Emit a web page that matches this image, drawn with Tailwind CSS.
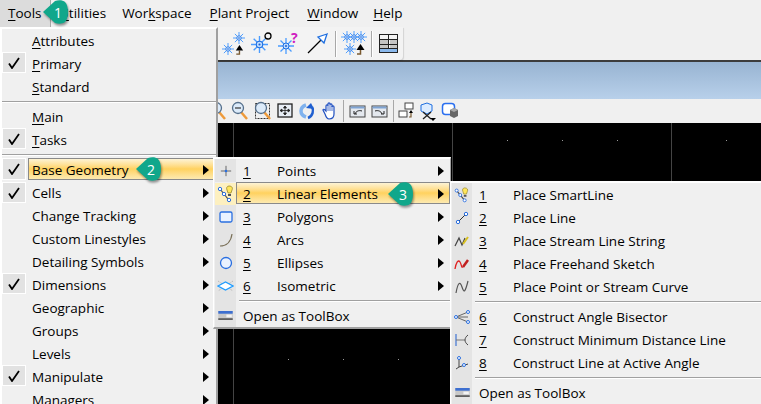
<!DOCTYPE html>
<html lang="en">
<head>
  <meta charset="UTF-8" />
  <title>Tools menu</title>
  <script src="https://cdn.jsdelivr.net/npm/@tailwindcss/browser@4"></script>
</head>
<body class="bg-black overflow-hidden">
  <svg class="hidden">
    <defs>
      <symbol id="star" viewBox="0 0 16 16">
        <path d="M8 0v16M0 8h16M2.500 2.500l11 11M13.500 2.500l-11 11" stroke="#4a9cff" stroke-width="1.300" fill="none"/>
        <circle cx="8" cy="8" r="3" fill="#bcdcff" stroke="#1f6fe0"/>
        <circle cx="8" cy="8" r="1" fill="#1f5fd0"/>
      </symbol>
      <symbol id="up" viewBox="0 0 10 12">
        <path d="M5.500 6v4H2" stroke="#7a5a30" stroke-width="1.500" fill="none"/>
        <path d="M5.500 0L1.500 6h8z" fill="#000"/>
      </symbol>
      <symbol id="mag" viewBox="0 0 20 20">
        <path d="M11 11l6 7" stroke="#ee9a3a" stroke-width="2.500"/>
        <circle cx="8" cy="7" r="5.500" fill="#dcebfa" stroke="#56708c" stroke-width="1.300"/>
      </symbol>
      <symbol id="smart" viewBox="0 0 18 18">
        <path d="M3 4l8 10" stroke="#444" stroke-width="1.200"/>
        <circle cx="3" cy="4" r="1.700" fill="#fff" stroke="#2a6fe0"/>
        <circle cx="7" cy="9" r="1.700" fill="#fff" stroke="#2a6fe0"/>
        <circle cx="12" cy="15" r="1.700" fill="#fff" stroke="#2a6fe0"/>
        <path d="M12 1c3 0 4 2 3 4l-1 3h-3l-1-3c-1-2 0-4 2-4z" fill="#ffe65a" stroke="#8a7a20" stroke-width=".7"/>
        <path d="M11 9h3v2h-3z" fill="#555"/>
      </symbol>
      <symbol id="toolbox" viewBox="0 0 16 10">
        <rect width="16" height="10" fill="#c8c8c8"/>
        <rect width="16" height="3" fill="#3d6fd0"/>
        <rect y="8" width="16" height="2" fill="#606060"/>
        <rect x="9" y="4" width="6" height="3" fill="#f4f4f4"/>
      </symbol>
      <symbol id="arrowright" viewBox="0 0 6 10">
        <path d="M0 0l6 5-6 5z" fill="#000"/>
      </symbol>
      <symbol id="check" viewBox="0 0 12 12">
        <path d="M1 6.500L4 11 11 1" fill="none" stroke="#000" stroke-width="1.800"/>
      </symbol>
    </defs>
  </svg>

  <div class="relative w-[761px] h-[404px] overflow-hidden text-[13.500px] text-black underline-offset-2 font-['Open_Sans',sans-serif]">

    <!-- menu bar -->
    <div class="h-[27px] bg-[#f0f0f0] flex items-center">
      <div class="w-[51px] h-full bg-[#dcdcdc] border-r border-[#a8a8a8] pl-[8px] flex items-center"><span><u>T</u>ools</span></div>
      <span class="ml-[8px]"><u>U</u>tilities</span>
      <span class="ml-[16px]">Wor<u>k</u>space</span>
      <span class="ml-[18px]"><u>P</u>lant Project</span>
      <span class="ml-[18px]"><u>W</u>indow</span>
      <span class="ml-[15px]"><u>H</u>elp</span>
    </div>

    <!-- toolbar row one -->
    <div class="h-[35px] bg-[#f0f0f0] border-b-2 border-[#3c3c3c]">
      <div class="ml-[217px] w-[186px] h-[33px] pl-[5px] flex items-center bg-[#f3f3f3] rounded-br-[4px] shadow-[1px_1px_1px_rgba(0,0,0,.12)]">
        <svg class="w-[24px] h-[24px]" viewBox="0 0 24 24">
          <use href="#star" x="0" y="11" width="12" height="12"/>
          <use href="#star" x="11" y="0" width="12" height="12"/>
          <use href="#up" x="12" y="13" width="10" height="11"/>
        </svg>
        <svg class="ml-[2px] w-[26px] h-[24px] overflow-visible" viewBox="0 0 26 24">
          <use href="#star" x="3" y="4" width="17" height="17"/>
          <ellipse cx="20" cy="4" rx="3" ry="3" fill="none" stroke="#000" stroke-width="1.300"/>
        </svg>
        <svg class="ml-[2px] w-[26px] h-[24px] overflow-visible" viewBox="0 0 26 24">
          <use href="#star" x="2" y="6" width="16" height="16"/>
          <text x="15" y="11" fill="#d020c0" font-size="14" font-weight="700">?</text>
        </svg>
        <svg class="ml-[5px] w-[22px] h-[22px]" viewBox="0 0 22 22">
          <path d="M1 20L15 6" stroke="#000" stroke-width="1.300"/>
          <path d="M20 1l-9 3 6 6z" fill="#fff" stroke="#1f6fe0" stroke-width="1.300"/>
        </svg>
        <div class="ml-[6px] w-[1px] h-[26px] bg-[#a8a8a8] border-r border-white box-content"></div>
        <svg class="ml-[3px] w-[28px] h-[26px]" viewBox="0 0 28 26">
          <use href="#star" x="1" y="0" width="12" height="12"/>
          <use href="#star" x="8" y="0" width="12" height="12"/>
          <use href="#star" x="15" y="0" width="12" height="12"/>
          <use href="#star" x="4" y="12" width="12" height="12"/>
          <use href="#up" x="15" y="13" width="10" height="12"/>
        </svg>
        <div class="ml-[3px] w-[1px] h-[26px] bg-[#a8a8a8] border-r border-white box-content"></div>
        <svg class="ml-[6px] w-[20px] h-[20px]" viewBox="0 0 20 20">
          <rect x=".5" y=".5" width="18" height="18" fill="#f4f4f4" stroke="#222"/>
          <rect x="1" y="6" width="8" height="4" fill="#c4c4c4"/>
          <rect x="11" y="6" width="7" height="4" fill="#c4c4c4"/>
          <rect x="1" y="11" width="8" height="3" fill="#c4c4c4"/>
          <rect x="11" y="11" width="7" height="3" fill="#c4c4c4"/>
          <rect x="1" y="15" width="17" height="3" fill="#8ab8ec"/>
          <path d="M1 5.500h18M1 10.500h18M1 14.500h18M9.500 1v13" stroke="#222"/>
        </svg>
      </div>
    </div>

    <!-- blue band -->
    <div class="h-[37px] bg-gradient-to-b from-[#98b4d2] to-[#b8d0ea]"></div>

    <!-- toolbar row two -->
    <div class="h-[24px] bg-[#f0f0f0] flex items-center pl-[208px]">
      <svg class="w-[20px] h-[20px]"><use href="#mag"/></svg>
      <svg class="ml-[2px] w-[20px] h-[20px]" viewBox="0 0 20 20">
        <use href="#mag"/><path d="M5 7h6" stroke="#333" stroke-width="1.200"/>
      </svg>
      <svg class="ml-[3px] w-[20px] h-[20px]" viewBox="0 0 20 20">
        <rect x="2.500" y="2.500" width="14" height="15" fill="none" stroke="#333" stroke-dasharray="2 1"/>
        <use href="#mag"/>
      </svg>
      <svg class="ml-[2px] w-[20px] h-[20px]" viewBox="0 0 20 20">
        <rect x="3" y="3" width="14" height="13" fill="#e8eef6" stroke="#222" stroke-width="1.300"/>
        <path d="M10 5v9M5 9.500h10M10 5l-1.500 2h3zM10 14l-1.500-2h3zM5 9.500l2-1.500v3zM15 9.500l-2-1.500v3z" stroke="#222" stroke-width=".8" fill="#222"/>
      </svg>
      <svg class="ml-[3px] w-[20px] h-[20px]" viewBox="0 0 20 20">
        <path d="M8 4C5 5 3 7 3 10s2 5 5 6" fill="none" stroke="#7fb2ee" stroke-width="3.500"/>
        <path d="M14 6c2 3 1 9-4 11" fill="none" stroke="#1f5fd0" stroke-width="2.500"/>
        <path d="M8 7l5-5 3 6z" fill="#1f5fd0"/>
      </svg>
      <svg class="ml-[2px] w-[20px] h-[20px]" viewBox="0 0 20 20">
        <path d="M5 13l-2-4c0-1 1-1 2 0l1 1V5c0-1.500 2-1.500 2 0V3c0-1.500 2-1.500 2 0v1c0-1.500 2-1.500 2 0v2c0-1.500 2-1.500 2 0v7c0 3-2 5-5 5-2 0-3-2-4-5z" fill="#fff" stroke="#1f4fc0" stroke-width="1.200"/>
        <path d="M8 5v5M10 4v6M12 5v5" stroke="#1f4fc0" stroke-width=".8"/>
      </svg>
      <div class="ml-[3px] w-[1px] h-[22px] bg-[#a8a8a8]"></div>
      <svg class="ml-[3px] w-[20px] h-[20px]" viewBox="0 0 20 20">
        <rect x="3" y="5" width="15" height="11" fill="#e4e8ee" stroke="#444"/>
        <rect x="3.500" y="5.500" width="14" height="2" fill="#7fa4d4"/>
        <path d="M15 10c-3-1-6 0-7 3M7 10v3h3" fill="none" stroke="#222"/>
      </svg>
      <svg class="ml-[2px] w-[20px] h-[20px]" viewBox="0 0 20 20">
        <rect x="3" y="5" width="15" height="11" fill="#e4e8ee" stroke="#444"/>
        <rect x="3.500" y="5.500" width="14" height="2" fill="#7fa4d4"/>
        <path d="M6 10c3-1 6 0 7 3M15 10v3h-3" fill="none" stroke="#222"/>
      </svg>
      <div class="ml-[4px] w-[1px] h-[22px] bg-[#a8a8a8]"></div>
      <svg class="ml-[3px] w-[20px] h-[20px]" viewBox="0 0 20 20">
        <rect x="8" y="2" width="8" height="6" fill="#fff" stroke="#444"/>
        <rect x="2" y="10" width="8" height="6" fill="#fff" stroke="#444"/>
        <path d="M14 11v5h-2" stroke="#7a5a30" stroke-width="1.200" fill="none"/>
        <path d="M14 9l-2 3h4z" fill="#000"/>
      </svg>
      <svg class="ml-[1px] w-[20px] h-[20px]" viewBox="0 0 20 20">
        <path d="M3 4l6-2 5 2v6l-5 3-6-3z" fill="#dcecff" stroke="#1f6fe0"/>
        <path d="M5 11l8 7M13 11l-8 7" stroke="#222" stroke-width="1.300"/>
        <path d="M12 17h6l-3 3z" fill="#000"/>
      </svg>
      <svg class="ml-[3px] w-[20px] h-[20px]" viewBox="0 0 20 20">
        <rect x="1.500" y="2.500" width="12" height="11" rx="3" fill="#fff" stroke="#2a6ff0" stroke-width="1.500"/>
        <path d="M9 9l4-2 4 2v6l-4 2-4-2z" fill="#666"/>
        <path d="M9 9l4-2 4 2-4 2z" fill="#a8a8a8"/>
      </svg>
    </div>

    <!-- view area -->
    <div class="relative h-[281px] bg-black">
      <div class="absolute left-[233px] top-0 bottom-0 w-px bg-[#444]"></div>
      <div class="absolute left-[452px] top-0 bottom-0 w-px bg-[#444]"></div>
      <div class="absolute left-[671px] top-0 bottom-0 w-px bg-[#444]"></div>
      <div class="absolute left-[507px] top-[17px] w-px h-px bg-[#999]"></div>
      <div class="absolute left-[562px] top-[17px] w-px h-px bg-[#999]"></div>
      <div class="absolute left-[617px] top-[17px] w-px h-px bg-[#999]"></div>
      <div class="absolute left-[726px] top-[17px] w-px h-px bg-[#999]"></div>
      <div class="absolute left-[288px] top-[236px] w-px h-px bg-[#999]"></div>
      <div class="absolute left-[343px] top-[236px] w-px h-px bg-[#999]"></div>
      <div class="absolute left-[398px] top-[236px] w-px h-px bg-[#999]"></div>
    </div>

    <!-- Tools menu -->
    <div class="absolute left-0 top-[27px] w-[218px] h-[390px] bg-[#f0f0f0] border-t-2 border-l-2 border-white border-r-2 border-r-[#a0a0a0] [&_span]:relative [&_span]:top-px">
      <div class="h-[23px] flex items-center pl-[30px]"><span><u>A</u>ttributes</span></div>
      <div class="relative h-[23px] flex items-center pl-[30px]"><div class="absolute left-0 top-0 w-[24px] h-[21px] bg-[#e2e2e2] border border-white flex items-center justify-center"><svg class="w-[12px] h-[12px]"><use href="#check"/></svg></div><span><u>P</u>rimary</span></div>
      <div class="h-[23px] flex items-center pl-[30px]"><span><u>S</u>tandard</span></div>
      <div class="h-[7px] pt-[3px]"><div class="h-px bg-[#a0a0a0]"></div><div class="h-px bg-white"></div></div>
      <div class="h-[23px] flex items-center pl-[30px]"><span><u>M</u>ain</span></div>
      <div class="relative h-[23px] flex items-center pl-[30px]"><div class="absolute left-0 top-0 w-[24px] h-[21px] bg-[#e2e2e2] border border-white flex items-center justify-center"><svg class="w-[12px] h-[12px]"><use href="#check"/></svg></div><span><u>T</u>asks</span></div>
      <div class="h-[7px] pt-[3px]"><div class="h-px bg-[#a0a0a0]"></div><div class="h-px bg-white"></div></div>

      <div class="relative h-[23px] flex items-center justify-between pl-[30px] pr-[7px]">
        <div class="absolute left-0 top-0 w-[24px] h-[22px] bg-[#e2e2e2] border border-white flex items-center justify-center"><svg class="w-[12px] h-[12px]"><use href="#check"/></svg></div>
        <div class="absolute left-[26px] top-0 w-[186px] h-[22px] border border-[#8a8a8a] bg-gradient-to-b from-[#fdf3d4] via-[#ffd25e] to-[#fdeab0]"></div>
        <span>Base Geometry</span><svg class="relative w-[6px] h-[10px]"><use href="#arrowright"/></svg>
      </div>
      <div class="relative h-[23px] flex items-center justify-between pl-[30px] pr-[7px]"><div class="absolute left-0 top-[1px] w-[24px] h-[21px] bg-[#e2e2e2] border border-white flex items-center justify-center"><svg class="w-[12px] h-[12px]"><use href="#check"/></svg></div><span>Cells</span><svg class="w-[6px] h-[10px]"><use href="#arrowright"/></svg></div>
      <div class="h-[23px] flex items-center justify-between pl-[30px] pr-[7px]"><span>Change Tracking</span><svg class="w-[6px] h-[10px]"><use href="#arrowright"/></svg></div>
      <div class="h-[23px] flex items-center justify-between pl-[30px] pr-[7px]"><span>Custom Linestyles</span><svg class="w-[6px] h-[10px]"><use href="#arrowright"/></svg></div>
      <div class="h-[23px] flex items-center justify-between pl-[30px] pr-[7px]"><span>Detailing Symbols</span><svg class="w-[6px] h-[10px]"><use href="#arrowright"/></svg></div>
      <div class="relative h-[23px] flex items-center justify-between pl-[30px] pr-[7px]"><div class="absolute left-0 top-0 w-[24px] h-[21px] bg-[#e2e2e2] border border-white flex items-center justify-center"><svg class="w-[12px] h-[12px]"><use href="#check"/></svg></div><span>Dimensions</span><svg class="w-[6px] h-[10px]"><use href="#arrowright"/></svg></div>
      <div class="h-[23px] flex items-center justify-between pl-[30px] pr-[7px]"><span>Geographic</span><svg class="w-[6px] h-[10px]"><use href="#arrowright"/></svg></div>
      <div class="h-[23px] flex items-center justify-between pl-[30px] pr-[7px]"><span>Groups</span><svg class="w-[6px] h-[10px]"><use href="#arrowright"/></svg></div>
      <div class="h-[23px] flex items-center justify-between pl-[30px] pr-[7px]"><span>Levels</span><svg class="w-[6px] h-[10px]"><use href="#arrowright"/></svg></div>
      <div class="relative h-[23px] flex items-center justify-between pl-[30px] pr-[7px]"><div class="absolute left-0 top-0 w-[24px] h-[21px] bg-[#e2e2e2] border border-white flex items-center justify-center"><svg class="w-[12px] h-[12px]"><use href="#check"/></svg></div><span>Manipulate</span><svg class="w-[6px] h-[10px]"><use href="#arrowright"/></svg></div>
      <div class="h-[23px] flex items-center justify-between pl-[30px] pr-[7px]"><span>Managers</span><svg class="w-[6px] h-[10px]"><use href="#arrowright"/></svg></div>
    </div>

    <!-- Base Geometry submenu -->
    <div class="absolute left-[213px] top-[157px] w-[238px] h-[172px] bg-[#f0f0f0] border-t-2 border-l border-white border-r border-r-[#a0a0a0] border-b-2 border-b-[#a0a0a0] pl-[1px] [&_span]:relative [&_span]:top-px">
      <div class="flex h-[23px] items-center">
        <div class="w-[21px] h-full bg-[#e4e4e4] flex items-center justify-center"><svg class="w-[12px] h-[12px]" viewBox="0 0 14 14"><path d="M7 1v12M1 7h12" stroke="#555"/><circle cx="7" cy="7" r="1.500" fill="#2a6fe0"/></svg></div>
        <span class="ml-[7px] w-[34px]"><u>1</u></span><span>Points</span><svg class="ml-auto mr-[6px] w-[6px] h-[10px]"><use href="#arrowright"/></svg>
      </div>
      <div class="relative flex h-[23px] items-center">
        <div class="w-[21px] h-[22px] bg-[#fdf0c0] flex items-center justify-center"><svg class="w-[18px] h-[18px]"><use href="#smart"/></svg></div>
        <div class="absolute left-[21px] top-0 right-0 h-[22px] border border-[#8a8a8a] bg-gradient-to-b from-[#fdf3d4] via-[#ffd25e] to-[#fdeab0]"></div>
        <span class="ml-[7px] w-[34px]"><u>2</u></span><span>Linear Elements</span><svg class="relative ml-auto mr-[6px] w-[6px] h-[10px]"><use href="#arrowright"/></svg>
      </div>
      <div class="flex h-[23px] items-center">
        <div class="w-[21px] h-full bg-[#e4e4e4] flex items-center justify-center"><svg class="w-[14px] h-[12px]" viewBox="0 0 14 12"><rect x="1" y="1" width="12" height="10" rx="1.500" fill="#eaf2ff" stroke="#2a6fe0" stroke-width="1.300"/></svg></div>
        <span class="ml-[7px] w-[34px]"><u>3</u></span><span>Polygons</span><svg class="ml-auto mr-[6px] w-[6px] h-[10px]"><use href="#arrowright"/></svg>
      </div>
      <div class="flex h-[23px] items-center">
        <div class="w-[21px] h-full bg-[#e4e4e4] flex items-center justify-center"><svg class="w-[14px] h-[14px]" viewBox="0 0 14 14"><path d="M1 13c6 0 11-4 12-12" fill="none" stroke="#7a7058" stroke-width="1.200"/></svg></div>
        <span class="ml-[7px] w-[34px]"><u>4</u></span><span>Arcs</span><svg class="ml-auto mr-[6px] w-[6px] h-[10px]"><use href="#arrowright"/></svg>
      </div>
      <div class="flex h-[23px] items-center">
        <div class="w-[21px] h-full bg-[#e4e4e4] flex items-center justify-center"><svg class="w-[14px] h-[14px]" viewBox="0 0 14 14"><circle cx="7" cy="7" r="5.500" fill="#eaf2ff" stroke="#2a6fe0" stroke-width="1.300"/></svg></div>
        <span class="ml-[7px] w-[34px]"><u>5</u></span><span>Ellipses</span><svg class="ml-auto mr-[6px] w-[6px] h-[10px]"><use href="#arrowright"/></svg>
      </div>
      <div class="flex h-[23px] items-center">
        <div class="w-[21px] h-full bg-[#e4e4e4] flex items-center justify-center"><svg class="w-[17px] h-[12px]" viewBox="0 0 17 12"><path d="M1 1l15 10M16 1L1 11" stroke="#888" stroke-width=".6" stroke-dasharray="1 1"/><path d="M1 6l7.500-4 7.500 4-7.500 4z" fill="#fff" stroke="#1f9cff" stroke-width="1.300"/></svg></div>
        <span class="ml-[7px] w-[34px]"><u>6</u></span><span>Isometric</span><svg class="ml-auto mr-[6px] w-[6px] h-[10px]"><use href="#arrowright"/></svg>
      </div>
      <div class="flex h-[7px]">
        <div class="w-[21px] bg-[#e4e4e4]"></div>
        <div class="flex-1 ml-[3px] pt-[3px]"><div class="h-px bg-[#a0a0a0]"></div><div class="h-px bg-white"></div></div>
      </div>
      <div class="flex h-[23px] items-center">
        <div class="w-[21px] h-full bg-[#e4e4e4] flex items-center justify-center"><svg class="w-[15px] h-[9px]"><use href="#toolbox"/></svg></div>
        <span class="ml-[7px]">Open as ToolBox</span>
      </div>
    </div>

    <!-- Linear Elements submenu -->
    <div class="absolute left-[450px] top-[181px] w-[311px] h-[223px] bg-[#f0f0f0] border-t-2 border-l border-white pl-[1px] [&_span]:relative [&_span]:top-px">
      <div class="flex h-[23px] items-center">
        <div class="w-[20px] h-full bg-[#e4e4e4] flex items-center justify-center"><svg class="w-[16px] h-[16px]"><use href="#smart"/></svg></div>
        <span class="ml-[7px] w-[34px]"><u>1</u></span><span>Place SmartLine</span>
      </div>
      <div class="flex h-[23px] items-center">
        <div class="w-[20px] h-full bg-[#e4e4e4] flex items-center justify-center"><svg class="w-[14px] h-[14px]" viewBox="0 0 14 14"><path d="M3 11L11 3" stroke="#333"/><circle cx="3" cy="11" r="1.700" fill="#fff" stroke="#2a6fe0"/><circle cx="11" cy="3" r="1.700" fill="#fff" stroke="#2a6fe0"/></svg></div>
        <span class="ml-[7px] w-[34px]"><u>2</u></span><span>Place Line</span>
      </div>
      <div class="flex h-[23px] items-center">
        <div class="w-[20px] h-full bg-[#e4e4e4] flex items-center justify-center"><svg class="w-[16px] h-[14px]" viewBox="0 0 16 14"><path d="M1 12L5 4l3 7 3-7" fill="none" stroke="#444" stroke-width="1.200"/><path d="M9 10l5-7" stroke="#d8c020" stroke-width="2"/></svg></div>
        <span class="ml-[7px] w-[34px]"><u>3</u></span><span>Place Stream Line String</span>
      </div>
      <div class="flex h-[23px] items-center">
        <div class="w-[20px] h-full bg-[#e4e4e4] flex items-center justify-center"><svg class="w-[16px] h-[14px]" viewBox="0 0 16 14"><path d="M1 12C2 6 4 2 6 5s1 6 3 5" fill="none" stroke="#e02020" stroke-width="1.300"/><path d="M9 10l5-7" stroke="#c02020" stroke-width="2.500"/></svg></div>
        <span class="ml-[7px] w-[34px]"><u>4</u></span><span>Place Freehand Sketch</span>
      </div>
      <div class="flex h-[23px] items-center">
        <div class="w-[20px] h-full bg-[#e4e4e4] flex items-center justify-center"><svg class="w-[14px] h-[14px]" viewBox="0 0 14 14"><path d="M1 13C3 2 5 1 7 7s3 6 6-6" fill="none" stroke="#555" stroke-width="1.200"/></svg></div>
        <span class="ml-[7px] w-[34px]"><u>5</u></span><span>Place Point or Stream Curve</span>
      </div>
      <div class="flex h-[7px]">
        <div class="w-[20px] bg-[#e4e4e4]"></div>
        <div class="flex-1 ml-[3px] pt-[3px]"><div class="h-px bg-[#a0a0a0]"></div><div class="h-px bg-white"></div></div>
      </div>
      <div class="flex h-[23px] items-center">
        <div class="w-[20px] h-full bg-[#e4e4e4] flex items-center justify-center"><svg class="w-[16px] h-[14px]" viewBox="0 0 16 14"><path d="M14 2L2 7l12 5M2 7h12" fill="none" stroke="#666"/><circle cx="14" cy="2" r="1.500" fill="#fff" stroke="#2a6fe0"/><circle cx="2" cy="7" r="1.500" fill="#fff" stroke="#2a6fe0"/><circle cx="14" cy="12" r="1.500" fill="#fff" stroke="#2a6fe0"/></svg></div>
        <span class="ml-[7px] w-[34px]"><u>6</u></span><span>Construct Angle Bisector</span>
      </div>
      <div class="flex h-[23px] items-center">
        <div class="w-[20px] h-full bg-[#e4e4e4] flex items-center justify-center"><svg class="w-[14px] h-[12px]" viewBox="0 0 14 12"><path d="M1 0v12" stroke="#1f5fd0"/><path d="M1 6h9" stroke="#777"/><path d="M13 1c-4 3-4 7 0 10" fill="none" stroke="#444"/></svg></div>
        <span class="ml-[7px] w-[34px]"><u>7</u></span><span>Construct Minimum Distance Line</span>
      </div>
      <div class="flex h-[23px] items-center">
        <div class="w-[20px] h-full bg-[#e4e4e4] flex items-center justify-center"><svg class="w-[14px] h-[15px]" viewBox="0 0 14 15"><path d="M4 3v9L1 14M4 12l9-3" fill="none" stroke="#444"/><circle cx="4" cy="3" r="1.500" fill="#fff" stroke="#2a6fe0"/><circle cx="9" cy="10" r="1.500" fill="#fff" stroke="#2a6fe0"/></svg></div>
        <span class="ml-[7px] w-[34px]"><u>8</u></span><span>Construct Line at Active Angle</span>
      </div>
      <div class="flex h-[7px]">
        <div class="w-[20px] bg-[#e4e4e4]"></div>
        <div class="flex-1 ml-[3px] pt-[3px]"><div class="h-px bg-[#a0a0a0]"></div><div class="h-px bg-white"></div></div>
      </div>
      <div class="flex h-[23px] items-center">
        <div class="w-[20px] h-full bg-[#e4e4e4] flex items-center justify-center"><svg class="w-[15px] h-[9px]"><use href="#toolbox"/></svg></div>
        <span class="ml-[7px]">Open as ToolBox</span>
      </div>
    </div>

    <!-- step callouts -->
    <div class="absolute left-[43px] top-0 w-[26px] h-[24px] flex items-center justify-end pr-[7px] text-white text-[14px]">
      <svg class="absolute left-0 top-0 drop-shadow-[1px_2px_1px_rgba(0,0,0,.4)]" width="26" height="24" viewBox="0 0 26 24"><path d="M0 12L12 1c3-1 8-1 10 1 4 4 4 16 0 20-2 2-7 2-10 1z" fill="#10a78b"/></svg>
      <span class="relative">1</span>
    </div>
    <div class="absolute left-[136px] top-[157px] w-[26px] h-[24px] flex items-center justify-end pr-[7px] text-white text-[14px]">
      <svg class="absolute left-0 top-0 drop-shadow-[1px_2px_1px_rgba(0,0,0,.4)]" width="26" height="24" viewBox="0 0 26 24"><path d="M0 12L12 1c3-1 8-1 10 1 4 4 4 16 0 20-2 2-7 2-10 1z" fill="#10a78b"/></svg>
      <span class="relative">2</span>
    </div>
    <div class="absolute left-[388px] top-[182px] w-[26px] h-[24px] flex items-center justify-end pr-[7px] text-white text-[14px]">
      <svg class="absolute left-0 top-0 drop-shadow-[1px_2px_1px_rgba(0,0,0,.4)]" width="26" height="24" viewBox="0 0 26 24"><path d="M0 12L12 1c3-1 8-1 10 1 4 4 4 16 0 20-2 2-7 2-10 1z" fill="#10a78b"/></svg>
      <span class="relative">3</span>
    </div>
  </div>
</body>
</html>
